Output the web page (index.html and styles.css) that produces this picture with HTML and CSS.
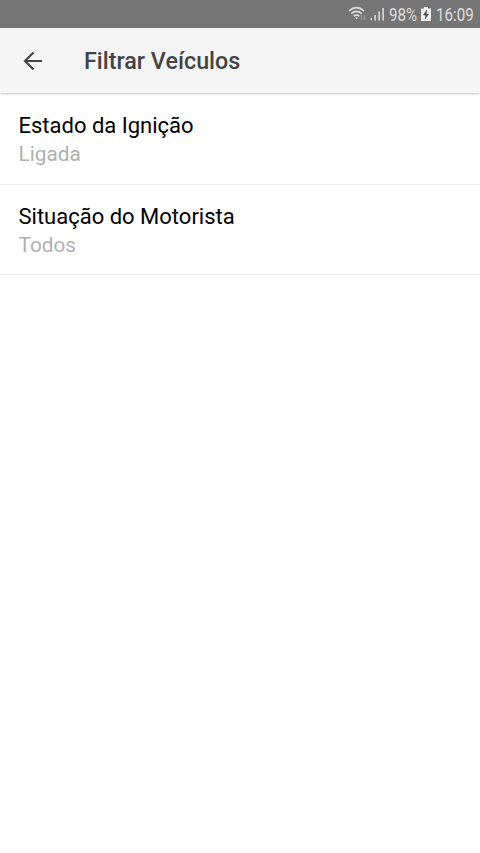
FILE: index.html
```html
<!DOCTYPE html>
<html lang="pt-BR">
<head>
<meta charset="utf-8">
<title>Filtrar Veículos</title>
<link rel="stylesheet" href="styles.css">
</head>
<body>
<div class="status">
<svg class="wifi" width="19" height="16" viewBox="0 0 19 16" fill="none" stroke="#dedede" stroke-width="1.700"><path d="M1 4.800Q8.500 -1.500 16 4.800M3.300 7.600Q8.500 3.300 13.700 7.600M5.700 10.200Q8.500 8 11.300 10.200"/><path d="M7 11.500h3L8.500 13.500z" fill="#dedede" stroke="none"/><path d="M13.500 9v5M16.500 9v5" stroke="#999" stroke-width="1.300"/></svg>
<svg class="signal" width="15" height="14" viewBox="0 0 15 14" fill="#d2d2d2"><path d="M.5 11H2v2.500H.5zM4.300 8H6v5.500H4.300zM8.300 4.500H10v9H8.300zM12.300 1H14v12.500h-1.700z"/></svg>
<span class="percent"><span class="narrow">98%</span></span>
<svg class="battery" width="10" height="14" viewBox="0 0 10 14"><path d="M3 0h4v1.500h3V14H0V1.500h3z" fill="#eee"/><path d="M5.800 3L2.500 8H5l-.8 4L7.500 7H5z" fill="#444" stroke="#444" stroke-width=".5"/></svg>
<span class="clock"><span class="narrow">16:09</span></span>
</div>
<header class="bar">
<svg class="back" width="20" height="20" viewBox="0 0 20 20" fill="none" stroke="#444" stroke-width="2.200"><path d="M19 10H2M10.500 1.500L2 10l8.500 8.500"/></svg>
<h1 class="title">Filtrar Veículos</h1>
</header>
<main>
<section class="item"><div class="label">Estado da Ignição</div><div class="value">Ligada</div></section>
<section class="item"><div class="label">Situação do Motorista</div><div class="value">Todos</div></section>
</main>
</body>
</html>
```
FILE: styles.css
```css
* { box-sizing: border-box; }
body { margin: 0; background: #fff; font-family: Roboto, sans-serif; min-height: 100vh; }
.status { height: 28px; background: #757575; display: flex; align-items: center; justify-content: flex-end; padding-right: 6px; color: #dedede; font-size: 18px; }
.wifi { margin-right: 3px; }
.signal { margin-right: 4px; }
.percent { width: 28px; margin-right: 4px; }
.battery { margin-right: 5px; }
.clock { width: 38px; }
.narrow { display: inline-block; transform: scaleX(.84); transform-origin: left center; }
.bar { height: 65px; margin-bottom: 1px; background: #f5f5f5; display: flex; align-items: center; padding-left: 23px; box-shadow: 0 1px 2px rgba(0,0,0,.24); }
.back { margin-right: 41px; }
.title { margin: 0; font-size: 23.3px; font-weight: 500; color: #444; line-height: 28px; }
.item { height: 90px; padding: 18px 19px 0 18.5px; border-bottom: 1px solid #ebebeb; }
.item:first-child { height: 91px; }
.label { font-size: 22px; line-height: 28px; color: #000; }
.value { font-size: 20.8px; line-height: 28px; color: #b0b0b0; }
```
